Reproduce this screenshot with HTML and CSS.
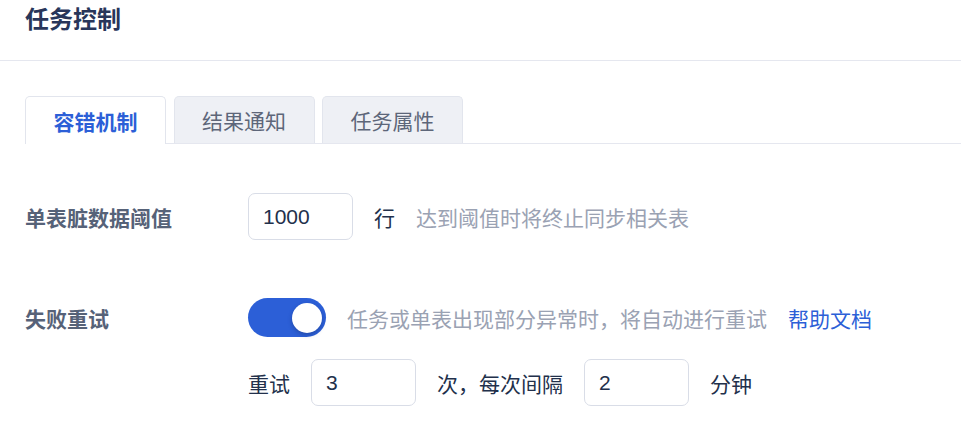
FILE: index.html
```html
<!DOCTYPE html>
<html lang="zh-CN">
<head>
<meta charset="utf-8">
<title>任务控制</title>
<link rel="stylesheet" href="styles.css">
</head>
<body>
<div class="page">
  <header class="header">
    <h1 class="title">任务控制</h1>
  </header>

  <nav class="tabs">
    <div class="tab tab-active">容错机制</div>
    <div class="tab">结果通知</div>
    <div class="tab">任务属性</div>
  </nav>

  <section class="form">
    <div class="row row-threshold">
      <div class="label">单表脏数据阈值</div>
      <div class="control">
        <div class="input">1000</div>
        <span class="text gap">行</span>
        <span class="hint gap">达到阈值时将终止同步相关表</span>
      </div>
    </div>

    <div class="row row-retry">
      <div class="label">失败重试</div>
      <div class="control">
        <div class="switch"><span class="knob"></span></div>
        <span class="hint gap">任务或单表出现部分异常时，将自动进行重试</span>
        <a class="link gap">帮助文档</a>
      </div>
    </div>

    <div class="row row-sub">
      <div class="control">
        <span class="text">重试</span>
        <div class="input gap">3</div>
        <span class="text gap">次，每次间隔</span>
        <div class="input gap">2</div>
        <span class="text gap">分钟</span>
      </div>
    </div>
  </section>
</div>
</body>
</html>
```

FILE: styles.css
```css
* {
  box-sizing: border-box;
}

html, body {
  margin: 0;
  padding: 0;
  background: #ffffff;
}

body {
  font-family: "Liberation Sans", "Noto Sans CJK SC", sans-serif;
  font-size: 21px;
  color: #22304b;
}

.page {
  width: 961px;
}

.header {
  height: 61px;
  border-bottom: 1px solid #e5e7ef;
  padding-left: 25px;
}

.title {
  margin: 0;
  font-size: 24px;
  line-height: 40px;
  font-weight: 700;
  color: #28365a;
}

.tabs {
  display: flex;
  margin: 35px 0 0 25px;
  border-bottom: 1px solid #e5e7ef;
  height: 48px;
}

.tab {
  width: 141px;
  height: 47px;
  margin-right: 7.5px;
  border: 1px solid #e2e5ed;
  border-bottom: none;
  border-radius: 5px 5px 0 0;
  background: #eef0f5;
  color: #5d6679;
  display: flex;
  align-items: center;
  justify-content: center;
  font-size: 21px;
}

.tab-active {
  height: 48px;
  background: #ffffff;
  color: #2c5fd7;
  font-weight: 700;
  position: relative;
  z-index: 1;
}

.form {
  padding-left: 25px;
}

.row {
  display: flex;
  align-items: center;
}

.row-threshold {
  margin-top: 49px;
  height: 47px;
}

.row-retry {
  margin-top: 58px;
  height: 39px;
}

.row-sub {
  margin-top: 22px;
  height: 47px;
  padding-left: 223px;
}

.label {
  width: 223px;
  flex: none;
  font-weight: 700;
  color: #566278;
}

.control {
  display: flex;
  align-items: center;
}

.gap {
  margin-left: 21px;
}

.input {
  width: 105px;
  height: 47px;
  border: 1px solid #d9dde7;
  border-radius: 7px;
  padding-left: 14px;
  display: flex;
  align-items: center;
  color: #22304b;
  font-size: 21px;
}

.text {
  color: #22304b;
}

.hint {
  color: #9aa2b3;
}

.link {
  color: #2c5fd7;
  cursor: pointer;
}

.switch {
  width: 78px;
  height: 39px;
  border-radius: 20px;
  background: #2c5fd7;
  position: relative;
  flex: none;
}

.knob {
  position: absolute;
  top: 4.5px;
  left: 43.5px;
  width: 30px;
  height: 30px;
  border-radius: 50%;
  background: #ffffff;
  box-shadow: 0 2px 4px rgba(20, 40, 90, 0.35);
}
```
